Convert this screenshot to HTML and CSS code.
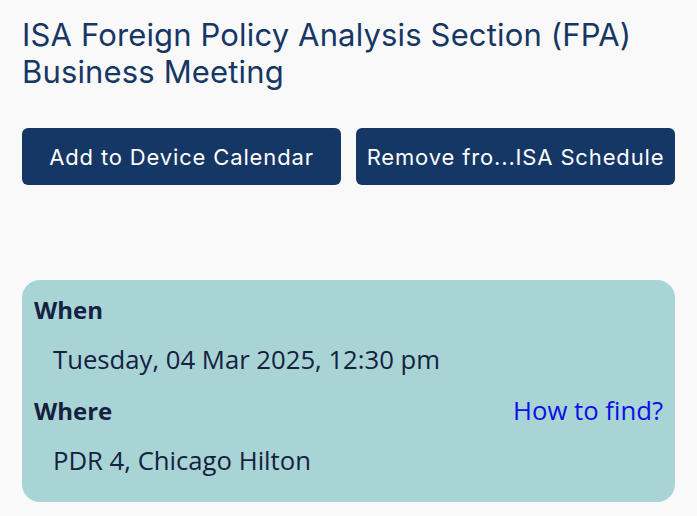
FILE: index.html
```html
<!DOCTYPE html>
<html lang="en">

<head>
    <meta charset="UTF-8">
    <meta name="viewport" content="width=device-width, initial-scale=1.0">
    <title>Session Detail</title>
    <link rel="stylesheet" href="styles.css">
</head>

<body>
    <div class="page">
        <!-- session title -->
        <h1 class="session-title">ISA Foreign Policy Analysis Section (FPA) Business Meeting</h1>

        <!-- action buttons -->
        <div class="actions">
            <button class="action-btn">Add to Device Calendar</button>
            <button class="action-btn">Remove fro...ISA Schedule</button>
        </div>

        <!-- when / where card -->
        <div class="info-card">
            <div class="info-label">When</div>
            <div class="info-value">Tuesday, 04 Mar 2025, 12:30 pm</div>
            <div class="info-row">
                <div class="info-label">Where</div>
                <a class="find-link" href="#">How to find?</a>
            </div>
            <div class="info-value">PDR 4, Chicago Hilton</div>
        </div>
    </div>
</body>

</html>
```

FILE: styles.css
```css
/* base */
body {
    margin: 0;
    padding: 0;
    background-color: #f9f9f9;
    font-family: Inter, "Noto Sans", sans-serif;
}

.page {
    padding: 16px 22px 0 22px;
}

/* title */
.session-title {
    margin: 0;
    font-size: 31px;
    font-weight: 400;
    line-height: 37px;
    color: #163665;
    letter-spacing: 0.15px;
}

/* buttons */
.actions {
    display: flex;
    gap: 15px;
    margin-top: 38px;
}

.action-btn {
    flex: 1;
    height: 57px;
    border: none;
    border-radius: 6px;
    background-color: #153766;
    color: white;
    font-family: Inter, "Noto Sans", sans-serif;
    font-size: 22px;
    letter-spacing: 0.85px;
    padding: 0;
    white-space: nowrap;
    cursor: pointer;
}

/* card */
.info-card {
    margin-top: 95px;
    background-color: #a8d4d6;
    border-radius: 18px;
    padding: 13px 12px 8px 12px;
    font-family: "Open Sans", sans-serif;
    color: #15213f;
}

.info-label {
    font-size: 24px;
    font-weight: 700;
    line-height: 34px;
}

.info-value {
    font-size: 25.7px;
    line-height: 34px;
    padding: 16px 0 16px 19px;
}

.info-row {
    display: flex;
    justify-content: space-between;
    align-items: center;
}

.find-link {
    color: #0a10e6;
    text-decoration: none;
    font-size: 25.7px;
}
```
